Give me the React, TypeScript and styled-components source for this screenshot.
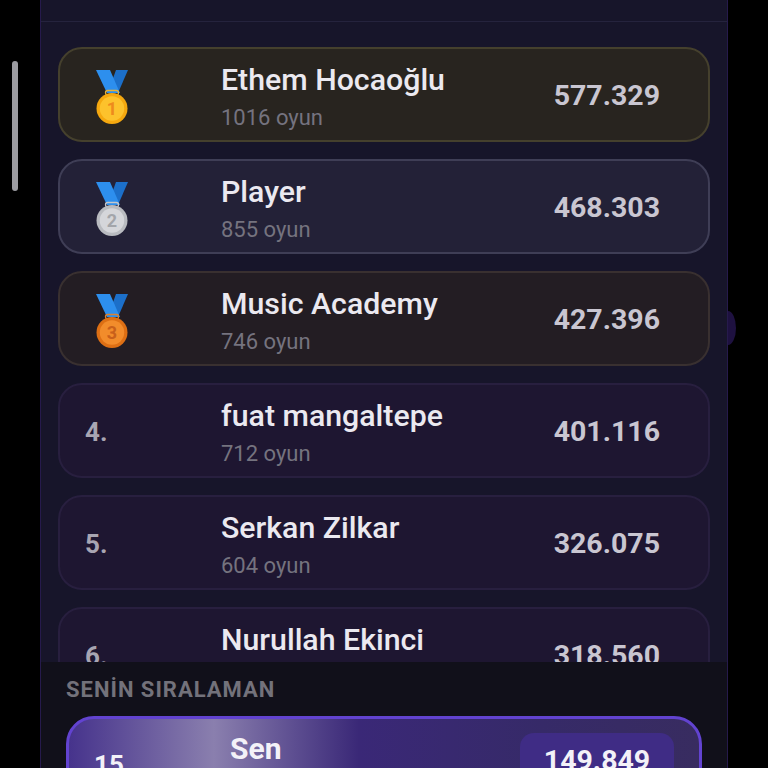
import styled, { createGlobalStyle } from "styled-components";

const GlobalStyle = createGlobalStyle`
  html, body {
    margin: 0;
    height: 100%;
    background: #000;
    font-family: Roboto, "Noto Sans", sans-serif;
  }
`;

type Tier = "gold" | "silver" | "bronze" | "plain";

const players: { rank: number; name: string; games: string; score: string; tier: Tier }[] = [
  { rank: 1, name: "Ethem Hocaoğlu", games: "1016 oyun", score: "577.329", tier: "gold" },
  { rank: 2, name: "Player", games: "855 oyun", score: "468.303", tier: "silver" },
  { rank: 3, name: "Music Academy", games: "746 oyun", score: "427.396", tier: "bronze" },
  { rank: 4, name: "fuat mangaltepe", games: "712 oyun", score: "401.116", tier: "plain" },
  { rank: 5, name: "Serkan Zilkar", games: "604 oyun", score: "326.075", tier: "plain" },
  { rank: 6, name: "Nurullah Ekinci", games: "", score: "318.560", tier: "plain" },
];

const medalColors = {
  gold: { rim: "#f5a80f", face: "#fdc22c", digit: "#ee8a1c", ring: "#e6b23a" },
  silver: { rim: "#b9bbc0", face: "#d5d6da", digit: "#a3a5aa", ring: "#c4c6cb" },
  bronze: { rim: "#dd6f14", face: "#f28c2b", digit: "#c9601a", ring: "#d98233" },
};

const Medal: React.FC<{ tier: "gold" | "silver" | "bronze"; digit: number }> = ({ tier, digit }) => {
  const c = medalColors[tier];
  return (
    <svg width="34" height="56" viewBox="0 0 34 56">
      <path d="M17 12 L21 1 H33 L23 24 H17 Z" fill="#1c6fc9" />
      <path d="M1 1 H15 L25 24 H12 Z" fill="#2d8fee" />
      <rect x="10.5" y="21.5" width="13" height="4.5" rx="2.2" fill="none" stroke={c.ring} strokeWidth="1.3" />
      <circle cx="17" cy="39.5" r="15.5" fill={c.rim} />
      <circle cx="17" cy="39.5" r="12.2" fill={c.face} />
      <text
        x="17"
        y="46"
        textAnchor="middle"
        fontFamily="Roboto, sans-serif"
        fontSize="18"
        fontWeight="700"
        fill={c.digit}
      >
        {digit}
      </text>
    </svg>
  );
};

const App: React.FC = () => (
  <Page>
    <GlobalStyle />
    <ScrollThumb />
    <Panel>
      <TopStrip />
      <List>
        {players.map((p) => (
          <Row key={p.rank} $tier={p.tier}>
            <RankCell>
              {p.tier === "plain" ? <RankText>{p.rank}.</RankText> : <Medal tier={p.tier} digit={p.rank} />}
            </RankCell>
            <Info>
              <Name>{p.name}</Name>
              <Games>{p.games}</Games>
            </Info>
            <Score>{p.score}</Score>
          </Row>
        ))}
      </List>
      <Footer>
        <FooterLabel>SENİN SIRALAMAN</FooterLabel>
        <MyCard>
          <MyRank>15.</MyRank>
          <MyName>Sen</MyName>
          <MyScore>149.849</MyScore>
        </MyCard>
      </Footer>
      <EdgeGlow />
    </Panel>
  </Page>
);

export default App;

const Page = styled.div`
  position: relative;
  isolation: isolate;
  height: 768px;
  overflow: hidden;
  display: flex;
  justify-content: center;
  background: #000;
`;

const ScrollThumb = styled.div`
  position: absolute;
  left: 12px;
  top: 61px;
  width: 6px;
  height: 130px;
  border-radius: 3px;
  background: #9c9ca1;
`;

const Panel = styled.div`
  position: relative;
  box-sizing: border-box;
  width: 688px;
  height: 768px;
  display: flex;
  flex-direction: column;
  background: #17152a;
  border-left: 1px solid #261a4c;
  border-right: 1px solid #261a4c;
`;

const EdgeGlow = styled.div`
  position: absolute;
  right: -9px;
  top: 311px;
  width: 16px;
  height: 34px;
  border-radius: 50%;
  background: #1e1140;
  z-index: -1;
`;

const TopStrip = styled.div`
  flex: none;
  height: 21px;
  border-bottom: 1px solid #25233d;
`;

const List = styled.div`
  flex: 1;
  min-height: 0;
  overflow: hidden;
  display: flex;
  flex-direction: column;
  gap: 17px;
  padding: 25px 17px 0;
`;

const rowColors: Record<Tier, { bg: string; border: string }> = {
  gold: { bg: "#28241f", border: "#45402d" },
  silver: { bg: "#232137", border: "#3f3e56" },
  bronze: { bg: "#231d23", border: "#393030" },
  plain: { bg: "#1e1631", border: "#281f3f" },
};

const Row = styled.div<{ $tier: Tier }>`
  flex: none;
  box-sizing: border-box;
  height: 95px;
  display: flex;
  align-items: center;
  padding: 0 48px 0 25px;
  border-radius: 24px;
  background: ${(p) => rowColors[p.$tier].bg};
  border: 2px solid ${(p) => rowColors[p.$tier].border};
`;

const RankCell = styled.div`
  flex: none;
  width: 136px;
  display: flex;
  align-items: center;

  svg {
    margin-left: 10px;
    margin-top: 4px;
  }
`;

const RankText = styled.span`
  padding-top: 2px;
  font-size: 26px;
  font-weight: 700;
  color: #a8a5b2;
`;

const Info = styled.div`
  flex: 1;
  min-width: 0;
  display: flex;
  flex-direction: column;
  gap: 8px;
  margin-top: 5px;
`;

const Name = styled.div`
  font-size: 30.3px;
  line-height: 34px;
  font-weight: 500;
  color: #ebe9f0;
`;

const Games = styled.div`
  min-height: 26px;
  font-size: 22px;
  line-height: 26px;
  color: #75737f;
`;

const Score = styled.div`
  font-size: 28.5px;
  font-weight: 700;
  color: #c9c6d1;
  margin-top: 2px;
`;

const Footer = styled.div`
  flex: none;
  height: 106px;
  box-sizing: border-box;
  padding: 15px 25px 0;
  background: #11101a;
  overflow: hidden;
`;

const FooterLabel = styled.div`
  font-size: 22px;
  line-height: 25px;
  font-weight: 700;
  letter-spacing: 1px;
  color: #73727b;
`;

const MyCard = styled.div`
  box-sizing: border-box;
  height: 96px;
  margin-top: 14px;
  display: flex;
  align-items: flex-start;
  padding: 14px 25px 0 25px;
  border: 3px solid #6243d0;
  border-radius: 28px;
  background: linear-gradient(90deg, #46338c 0%, #8a7fae 23%, #5c4d90 36%, #3a2877 46%, #362a68 75%, #382c60 100%);
`;

const MyRank = styled.span`
  flex: none;
  width: 136px;
  padding-top: 17px;
  font-size: 26px;
  font-weight: 700;
  color: #f3f1f8;
`;

const MyName = styled.span`
  flex: 1;
  margin-top: -1px;
  font-size: 30px;
  line-height: 34px;
  font-weight: 700;
  color: #f3f1f8;
`;

const MyScore = styled.span`
  flex: none;
  box-sizing: border-box;
  width: 154px;
  height: 70px;
  padding-top: 11px;
  text-align: center;
  font-size: 28.5px;
  font-weight: 700;
  color: #f3f1f8;
  background: #3f2c85;
  border-radius: 14px;
`;
